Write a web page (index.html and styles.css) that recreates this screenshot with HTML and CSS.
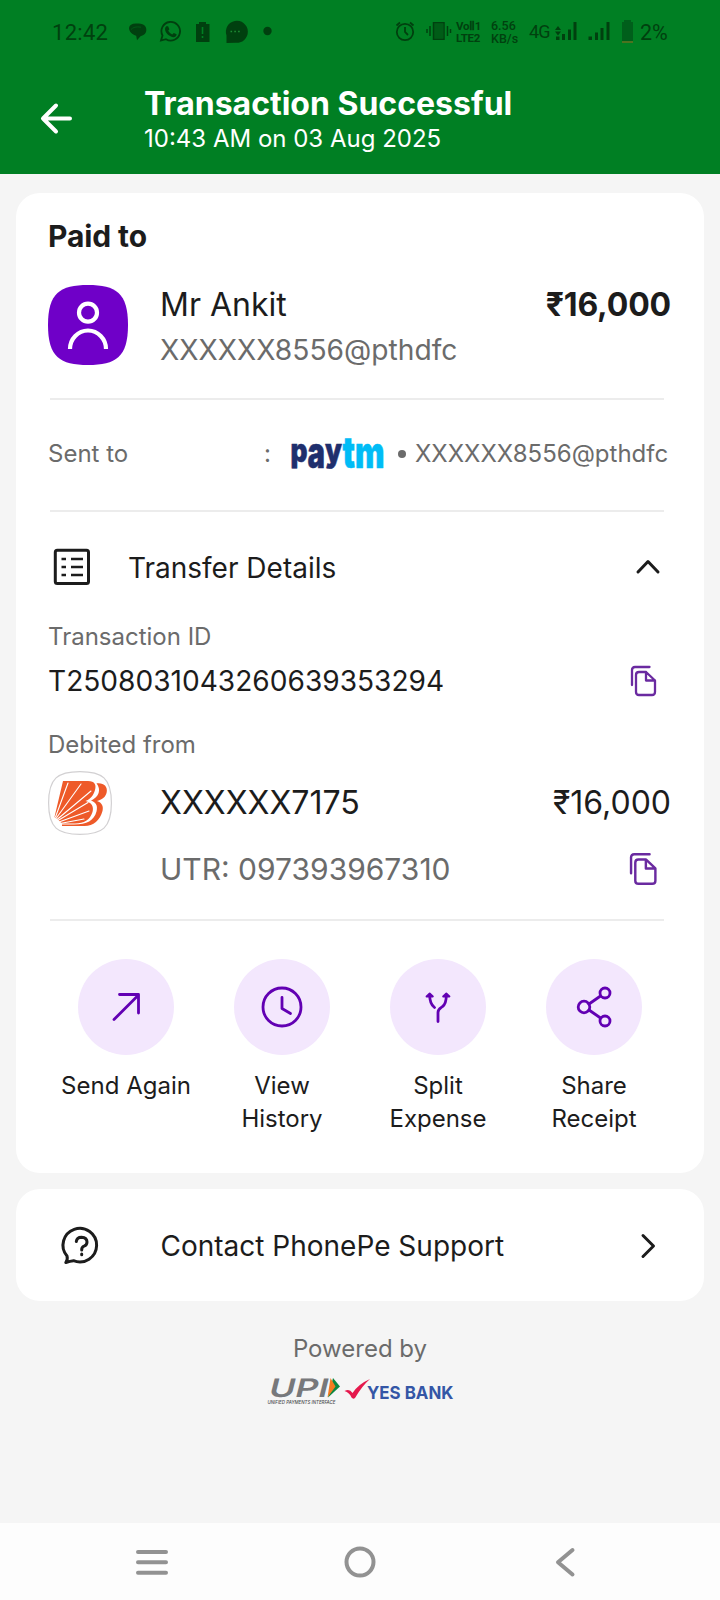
FILE: index.html
```html
<!DOCTYPE html>
<html lang="en">
<head>
<meta charset="utf-8">
<title>Transaction Successful</title>
<link rel="stylesheet" href="styles.css">
</head>
<body>
<div class="screen">
  <header class="header">
    <div class="status">
      <span class="clock">12:42</span>
      <svg class="ic" width="152" height="28" viewBox="124 18 152 28">
        <path class="dark" d="M129 28q.5-4.500 7-4.500c4 0 6 .3 8 1.500 3 2 3 7 .8 9q-1.500 1.500-4.300 2.200l-3.500 4-.8-4.500c-4-1-7.200-4.200-7.200-7.700z"/>
        <path class="faint" d="M131 29.500q3-3.500 10-2.300"/>
        <path class="line" d="M161 40.500l1.500-5a9.300 9.300 0 1 1 3.500 3.700z" stroke-width="1.800"/>
        <path class="dark" d="M166.300 26.300l1.800 0 1.300 3-1.200 1.500q1.500 2.600 4 3.700l1.600-1.600 2.800 1.400c0 2-2 3.200-3.600 2.900-4-.7-8-4.700-8-8.200q0-1.600 1.300-2.700z"/>
        <path class="dark" d="M199 22h7v2h3.500v18H196V24h3z"/>
        <path d="M202.500 27v7m0 2v2" stroke="#007f23" stroke-width="1.600"/>
        <path class="dark" d="M226.500 43v-7.500a11 11 0 1 1 9 7.200z"/>
        <path d="M230.500 31.500h1.600m2.200 0h1.600m2.200 0h1.600" stroke="#1d8a33" stroke-width="1.600"/>
        <circle class="dark" cx="267.500" cy="31" r="4.200"/>
      </svg>
      <span class="grow"></span>
      <svg class="ic" width="60" height="28" viewBox="393 18 60 28">
        <circle class="line" cx="405" cy="32" r="8.200" stroke-width="1.800"/>
        <path class="line" d="M405 27v5l3 3M396.500 25.500l3.500-3M410 22.500l3.500 3" stroke-width="1.800"/>
        <rect class="dark" x="434" y="23.500" width="9" height="15" opacity=".55"/>
        <path class="line" d="M433.500 22.800h10.500v16.500h-10.500zM430 26v10m-3-7v4m20.500-7v10m3-7v4" stroke-width="1.500"/>
      </svg>
      <span class="tiny volte">VoⅡ1<br>LTE2</span>
      <span class="tiny rate">6.56<br>KB/s</span>
      <span class="net">4G</span>
      <svg class="ic" width="84" height="28" viewBox="553 18 84 28">
        <path class="dark" d="M555 30l3-4 3 4zM555 31.500h6l-3 4zM556 36.500h3.500V40H556zM562 34h3v6h-3zM568 29.500h3V40h-3zM573.500 26.500h3V40h-3zM573.500 22h3v18h-3z"/>
        <path class="dark" d="M588.500 36.500h3.500V40h-3.500zM595 32.500h3V40h-3zM600.500 28h3v12h-3zM606.500 22h3v18h-3z"/>
        <path d="M624 20h7v2h2v19h-11V22h2z" fill="#005f1b"/><path d="M622 41h11v2h-11z" fill="#4c731f"/>
      </svg>
      <span class="batt">2%</span>
    </div>
    <div class="bar">
      <svg class="back" width="36" height="36" viewBox="38 100 36 36"><path d="M70 118.500H43M56 105.500L43 118.500 56 131.500"/></svg>
      <div class="heading">
        <h1 class="title">Transaction Successful</h1>
        <p class="subtitle">10:43 AM on 03 Aug 2025</p>
      </div>
    </div>
  </header>

  <main>
    <section class="card receipt">
      <h2 class="paid">Paid to</h2>
      <div class="payee">
        <svg class="avatar" width="80" height="80" viewBox="0 0 80 80">
          <path d="M40 0C68 0 80 8 80 40S68 80 40 80 0 72 0 40 12 0 40 0z" fill="#6f00c8"/>
          <g fill="none" stroke="#fff" stroke-width="4.200" stroke-linecap="butt"><circle cx="40" cy="27.700" r="9"/><path d="M22 64a18 18.500 0 0 1 36 0"/></g>
        </svg>
        <div class="who">
          <div class="name">Mr Ankit</div>
          <div class="vpa">XXXXXX8556@pthdfc</div>
        </div>
        <div class="amount strong">₹16,000</div>
      </div>
      <hr class="rule">
      <div class="sent">
        <span class="sent-label">Sent to</span><span class="colon">:</span>
        <svg class="paytm" width="96" height="38" viewBox="289 433 96 38" aria-label="paytm">
          <g fill="#1f2f6d" stroke="#1f2f6d">
            <text class="low" x="290.500" y="459.500" textLength="17" lengthAdjust="spacingAndGlyphs">p</text>
            <text class="tall" x="307.500" y="465.500" textLength="17.500" lengthAdjust="spacingAndGlyphs">a</text>
            <text class="low" x="325" y="459.500" textLength="17" lengthAdjust="spacingAndGlyphs">y</text>
          </g>
          <text class="tall" x="342.500" y="465.500" textLength="42" lengthAdjust="spacingAndGlyphs" fill="#00bcf6" stroke="#00bcf6">tm</text>
        </svg>
        <span class="dot"></span>
        <span class="sent-vpa">XXXXXX8556@pthdfc</span>
      </div>
      <hr class="rule">
      <div class="details">
        <svg width="40" height="40" viewBox="52 546 40 40"><rect x="55.300" y="549.300" width="33.200" height="33.200" rx="2"/><path class="rows" d="M61.500 558h4.500m5 0h12M61.500 566h4.500m5 0h12M61.500 574h4.500m5 0h12"/></svg>
        <span class="details-label">Transfer Details</span>
        <svg width="28" height="20" viewBox="634 556 28 20"><path d="M638 571l10-10.500 10 10.500"/></svg>
      </div>
      <div class="label">Transaction ID</div>
      <div class="txn">
        <span class="txn-id">T2508031043260639353294</span>
        <svg class="copy" width="26" height="30" viewBox="0 0 26 30"><path d="M1 19V4q0-3 3-3h14.500M8 6h7l9 8.500V26q0 3-3 3H8q-3 0-3-3V9q0-3 3-3zM15 6v8.500h9"/></svg>
      </div>
      <div class="label debited">Debited from</div>
      <div class="bank">
        <svg width="64" height="64" viewBox="0 0 64 64">
          <path d="M32 .6C54 .6 63.400 7 63.400 32S54 63.400 32 63.400.6 57 .6 32 10 .6 32 .6z" fill="#fff" stroke="#d2d0d2" stroke-width="1.200"/>
          <path d="M15 10h25c7 0 8.500 4 7 9-1.300 5-4.500 9-9.500 11 6.500 1.500 8.500 6 7 11-2.500 8-8.500 11.500-17.500 11.500H14L6.500 46z" fill="#ee5a29"/>
          <path d="M48.500 12.300c7-1 11.500 3 10.200 9-1 5-5 7.700-9.700 8.700 5 1.500 6.700 5.500 5.500 10-2.500 9-9 15-18 15H14v-1.400h12c13 0 20-4 22.500-13 1.500-6-.5-9.500-5.500-10.800 8-4 10.500-11 5.500-17.500z" fill="#ee5a29"/>
          <path d="M7.500 46L20 12M8 47.500L33 13M9 48.500L43 20M10 49.500l30-18M11 51l30-11M12 52.500l24-4.500" stroke="#fff" stroke-width="1.100"/>
        </svg>
        <span class="acct">XXXXXX7175</span>
        <span class="amount">₹16,000</span>
      </div>
      <div class="utr">
        <span class="utr-no">UTR: 097393967310</span>
        <svg class="copy" width="27.500" height="32" viewBox="0 0 26 30"><path d="M1 19V4q0-3 3-3h14.500M8 6h7l9 8.500V26q0 3-3 3H8q-3 0-3-3V9q0-3 3-3zM15 6v8.500h9"/></svg>
      </div>
      <hr class="rule">
      <div class="actions">
        <div class="action"><span class="disc"><svg viewBox="0 0 96 96"><path d="M36 60.500L60.500 36M41.500 35.500H60.500V54"/></svg></span>Send Again</div>
        <div class="action"><span class="disc"><svg viewBox="0 0 96 96"><circle cx="48" cy="48" r="19"/><path d="M48 38.500V49.500L56.500 54.500"/></svg></span>View<br>History</div>
        <div class="action"><span class="disc"><svg viewBox="0 0 96 96"><path d="M48 62.500V53.500C48 50 50 49.500 52.500 47.500 56 45 56.300 41 56.300 36M39.700 36C39.700 41 40.500 45.500 44.500 48.500"/><path class="tips" d="M36.500 37.500l3.200-3 3.200 3zM53.100 37.500l3.200-3 3.200 3z"/></svg></span>Split<br>Expense</div>
        <div class="action"><span class="disc"><svg viewBox="0 0 96 96"><circle cx="38" cy="48" r="5.800"/><circle cx="59" cy="34" r="5"/><circle cx="59" cy="62" r="5"/><path d="M43 45L54.500 37M43 51L54.500 59"/></svg></span>Share<br>Receipt</div>
      </div>
    </section>

    <section class="card support">
      <svg width="40" height="40" viewBox="60 1225 40 40"><path d="M63.800 1261.500q2.200-3.200 1.200-6.500A16.800 16.800 0 1 1 71.500 1259.700q-3.200.3-7.700 1.800z"/><path d="M74.300 1240.500q.5-4.300 5.200-4.300 5.500.3 5.500 4.800 0 3-3 4.200-2.300.8-2.300 3.800M79.700 1253v.8"/></svg>
      <span class="support-label">Contact PhonePe Support</span>
      <svg width="20" height="28" viewBox="638 1232 20 28"><path d="M643 1235.500l10.500 10.500-10.500 10.500"/></svg>
    </section>

    <footer class="powered">
      <div>Powered by</div>
      <svg width="188" height="30" viewBox="267 1376 188 30">
        <g font-family="Inter, sans-serif">
          <text transform="translate(267.500 1396.500) skewX(-14)" font-size="25.500" font-weight="600" fill="#77787b" textLength="59" lengthAdjust="spacingAndGlyphs">UPI</text>
          <path d="M333 1378l7 8.500-12 11z" fill="#0a8742"/><path d="M330.500 1378l5 8.500-8 11z" fill="#f47a20"/>
          <text x="267.500" y="1403.500" font-size="5" font-weight="500" font-style="italic" fill="#4c4d50" textLength="68" lengthAdjust="spacingAndGlyphs">UNIFIED PAYMENTS INTERFACE</text>
          <path d="M344.500 1391q5-3 8 2 6-9 17.500-14-8 7-15 19-2 1.500-3.500-.5-2-5-7-6.500z" fill="#e5184c"/>
          <text x="367" y="1398.700" font-size="18" font-weight="700" fill="#3456a6" textLength="86.500" lengthAdjust="spacingAndGlyphs">YES BANK</text>
        </g>
      </svg>
    </footer>
  </main>

  <nav class="nav">
    <svg width="32" height="28" viewBox="0 0 32 28"><path d="M2 4h28M2 14.300h28M2 24.700h28"/></svg>
    <svg class="home" width="32" height="32" viewBox="0 0 32 32"><circle cx="16" cy="16" r="13.500"/></svg>
    <svg width="20" height="30" viewBox="0 0 20 30"><path d="M17.500 3L3 15.300 17.500 27.500"/></svg>
  </nav>
</div>
</body>
</html>
```
FILE: styles.css
```css
* { box-sizing: border-box; margin: 0; }
body {
  font-family: Inter, "Liberation Sans", sans-serif;
  color: #1c1c1c;
  background: #f5f5f5;
}
.screen { width: 720px; height: 1600px; display: flex; flex-direction: column; overflow: hidden; }
svg { display: block; flex: none; fill: none; stroke-linecap: round; stroke-linejoin: round; overflow: visible; }
span, div, h1, h2, p { white-space: nowrap; }

.header { height: 174px; background: #007f23; color: #fff; flex: none; }
.status { height: 64px; display: flex; align-items: center; padding: 0 51px 0 52px; color: #00410f; }
.status .ic { stroke-linecap: butt; stroke-linejoin: miter; }
.dark { fill: #00400f; }
.line { stroke: #00400f; fill: none; }
.faint { stroke: #005a17; fill: none; }
.clock { width: 72px; padding-top: 1px; font: 400 22px/26px Roboto, sans-serif; letter-spacing: .3px; }
.grow { flex: 1; }
.tiny { font: 700 11.500px/12px Roboto, sans-serif; }
.volte { width: 35px; padding-left: 3px; letter-spacing: -.3px; }
.rate { width: 39px; padding-left: 3px; font-weight: 500; font-size: 12.500px; line-height: 13.500px; }
.net { width: 26px; padding-left: 2px; font: 400 18px/24px Roboto, sans-serif; letter-spacing: -.8px; }
.batt { width: 32px; padding: 1px 0 0 3px; font: 400 21.500px/24px Roboto, sans-serif; }
.bar { height: 110px; display: flex; padding: 18px 0 0 38px; }
.back { margin-top: 18px; stroke: #fff; stroke-width: 4; }
.heading { padding: 1px 0 0 70px; }
.title { font-size: 32px; line-height: 42px; font-weight: 700; }
.subtitle { font-size: 24px; line-height: 28px; }

.card { margin: 0 16px; background: #fff; border-radius: 24px; }
.receipt { margin-top: 19px; height: 980px; padding: 23px 32px 0; }
.paid { font-size: 30px; line-height: 40px; font-weight: 700; letter-spacing: -.1px; }
.payee { height: 80px; margin-top: 29px; display: flex; }
.who { flex: 1; padding-left: 32px; }
.name { font-size: 32px; line-height: 40px; }
.vpa { font-size: 28.200px; line-height: 50px; color: #6b6b6b; }
.amount { font-size: 32px; line-height: 40px; margin-right: 1px; }
.strong { font-weight: 700; letter-spacing: -.15px; }
.rule { border: 0; height: 2px; background: #ececec; margin: 33px 8px 0 2px; }
.sent { height: 110px; display: flex; align-items: center; color: #6b6b6b; font-size: 24px; padding-bottom: 3px; }
.sent-label { width: 216px; }
.colon { width: 25px; }
.paytm text { font-family: Inter, sans-serif; font-weight: 900; stroke-width: .5; }
.paytm .low { font-size: 32px; }
.paytm .tall { font-size: 43px; }
.dot { width: 8px; height: 8px; border-radius: 50%; background: #6b6b6b; margin: 0 9px 0 13px; }
.sent + .rule { margin-top: 0; }
.details { height: 109px; display: flex; align-items: center; margin: 0 10px 0 4px; stroke: #1c1c1c; stroke-width: 3; }
.details span { stroke: none; flex: 1; padding: 2px 0 0 36px; font-size: 28px; }
.rows { stroke-width: 2.600; stroke-linecap: butt; }
.label { font-size: 24px; line-height: 32px; color: #6b6b6b; }
.txn { height: 56px; display: flex; align-items: center; justify-content: space-between; padding-right: 15px; }
.txn-id { font-size: 28.100px; }
.copy { stroke: #6a2aa0; stroke-width: 2.300; }
.debited { margin-top: 20px; }
.bank { margin-top: 10px; height: 64px; display: flex; align-items: center; }
.acct { flex: 1; padding: 0 0 2px 48px; font-size: 32.100px; }
.utr { height: 70px; margin-top: -1px; display: flex; align-items: center; justify-content: space-between; padding: 0 15px 0 112px; }
.utr-no { font-size: 30px; color: #6b6b6b; }
.utr + .rule { margin-top: 15px; }
.actions { display: grid; grid-template-columns: repeat(4, 156px); padding-top: 38px; }
.action { text-align: center; font-size: 24px; line-height: 32.500px; }
.disc { display: block; width: 96px; height: 96px; margin: 0 auto 15px; border-radius: 50%; background: #f3e7fd; }
.disc svg { stroke: #6200b3; stroke-width: 2.800; }
.disc .tips { fill: #6200b3; stroke-width: 1.800; }

.support { margin-top: 16px; height: 112px; display: flex; align-items: center; padding: 2px 46px 0; stroke: #1c1c1c; stroke-width: 3; }
.support-label { flex: 1; padding-left: 58.500px; font-size: 28px; stroke: none; }
.powered { margin-top: 32px; display: flex; flex-direction: column; align-items: center; font-size: 24px; line-height: 32px; color: #6b6b6b; }
.powered svg { margin-top: 11px; margin-left: 2px; }

.nav { margin-top: auto; height: 77.500px; background: #fdfdfd; display: flex; align-items: center; padding: 1px 0 0 136px; stroke: #929292; stroke-width: 4; }
.home { margin: 0 179px 0 176px; }
```
